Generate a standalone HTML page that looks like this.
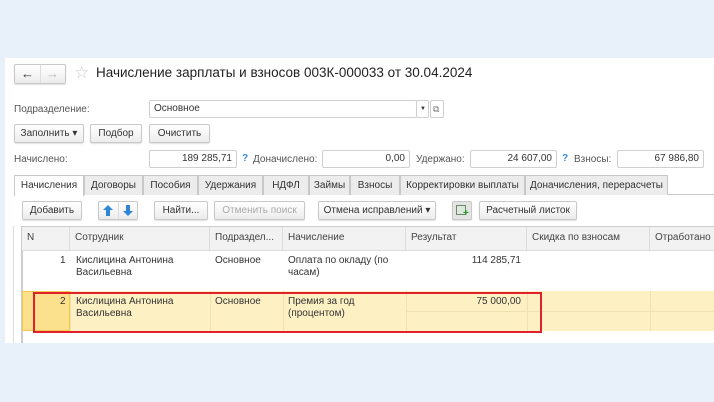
<!DOCTYPE html>
<html><head><meta charset="utf-8"><style>
*{box-sizing:border-box;margin:0;padding:0}
body{width:714px;height:402px;background:#e8f1fa;font-family:"Liberation Sans",Arial,sans-serif;font-size:10px;color:#333;position:relative;overflow:hidden}
.a{position:absolute;white-space:nowrap}
#p{position:absolute;left:5px;top:58px;width:709px;height:285px;background:#fff}
.btn{position:absolute;height:19px;border:1px solid #c8c8c8;border-radius:2px;background:linear-gradient(#fff,#ececec);box-shadow:0 1px 1px rgba(0,0,0,.12);font-size:10px;line-height:17px;text-align:center;color:#333;white-space:nowrap;overflow:hidden}
.inp{position:absolute;height:18px;border:1px solid #cfcfcf;border-radius:2px;background:#fff;line-height:16px;padding:0 4px;font-size:10px;white-space:nowrap}
.r{text-align:right}
.q{color:#3a8bd2;font-weight:bold}
.lbl{color:#555}
.tab{position:absolute;top:175px;height:20px;border:1px solid #c8c8c8;border-bottom:none;background:#ececec;line-height:19px;text-align:center;font-size:10px;white-space:nowrap;overflow:hidden}
.hc{position:absolute;top:227px;height:23px;border-right:1px solid #dcdcdc;line-height:22px;padding-left:5px;color:#444;white-space:nowrap;overflow:hidden}
.c{position:absolute;font-size:10px;line-height:12px;color:#333;white-space:nowrap}
</style></head><body>
<div id="p"></div>
<!-- nav -->
<div class="btn" style="left:14px;top:64px;width:52px;height:20px"></div>
<div class="a" style="left:40px;top:65px;width:1px;height:18px;background:#ddd"></div>
<div class="a" style="left:21px;top:66px;font-size:13px;color:#333">&#8592;</div>
<div class="a" style="left:46px;top:66px;font-size:13px;color:#bbb">&#8594;</div>
<div class="a" style="left:74px;top:63px;font-size:17px;color:#ccc">&#9734;</div>
<div class="a" style="left:96px;top:65px;font-size:13.5px;color:#222">Начисление зарплаты и взносов 003К-000033 от 30.04.2024</div>
<!-- подразделение -->
<div class="a lbl" style="left:14px;top:104px">Подразделение:</div>
<div class="inp" style="left:149px;top:100px;width:268px">Основное</div>
<div class="inp" style="left:416px;top:100px;width:13px;font-size:6px;padding:0 3px">&#9660;</div>
<div class="inp" style="left:430px;top:100px;width:14px;font-size:9px;padding:0 2px;color:#777">&#10697;</div>
<!-- buttons -->
<div class="btn" style="left:14px;top:124px;width:70px">Заполнить ▾</div>
<div class="btn" style="left:90px;top:124px;width:52px">Подбор</div>
<div class="btn" style="left:149px;top:124px;width:61px">Очистить</div>
<!-- totals -->
<div class="a lbl" style="left:14px;top:154px">Начислено:</div>
<div class="inp r" style="left:149px;top:150px;width:88px">189 285,71</div>
<div class="a q" style="left:242px;top:153px">?</div>
<div class="a lbl" style="left:253px;top:154px">Доначислено:</div>
<div class="inp r" style="left:322px;top:150px;width:88px">0,00</div>
<div class="a lbl" style="left:416px;top:154px">Удержано:</div>
<div class="inp r" style="left:470px;top:150px;width:87px">24 607,00</div>
<div class="a q" style="left:562px;top:153px">?</div>
<div class="a lbl" style="left:574px;top:154px">Взносы:</div>
<div class="inp r" style="left:617px;top:150px;width:87px">67 986,80</div>
<!-- tabs -->
<div class="a" style="left:14px;top:194px;width:700px;height:1px;background:#c8c8c8"></div>
<div class="tab" style="left:14px;width:70px;background:#fff;height:21px">Начисления</div>
<div class="tab" style="left:84px;width:59px">Договоры</div>
<div class="tab" style="left:143px;width:55px">Пособия</div>
<div class="tab" style="left:198px;width:65px">Удержания</div>
<div class="tab" style="left:263px;width:46px">НДФЛ</div>
<div class="tab" style="left:309px;width:41px">Займы</div>
<div class="tab" style="left:350px;width:50px">Взносы</div>
<div class="tab" style="left:400px;width:125px">Корректировки выплаты</div>
<div class="tab" style="left:525px;width:143px">Доначисления, перерасчеты</div>
<!-- toolbar -->
<div class="btn" style="left:22px;top:201px;width:60px">Добавить</div>
<div class="btn" style="left:98px;top:201px;width:40px"></div>
<div class="a" style="left:118px;top:202px;width:1px;height:17px;background:#ddd"></div>
<svg class="a" style="left:103px;top:205px" width="10" height="11"><path d="M5 0L10 5H7V11H3V5H0Z" fill="#2f86d6"/></svg>
<svg class="a" style="left:123px;top:205px" width="10" height="11"><path d="M5 11L10 6H7V0H3V6H0Z" fill="#2f86d6"/></svg>
<div class="btn" style="left:154px;top:201px;width:54px">Найти...</div>
<div class="btn" style="left:214px;top:201px;width:91px;color:#aaa">Отменить поиск</div>
<div class="btn" style="left:318px;top:201px;width:118px">Отмена исправлений ▾</div>
<div class="btn" style="left:452px;top:201px;width:20px;background:#e4e4e4"></div>
<div class="a" style="left:456px;top:205px;width:10px;height:10px;border:1px solid #6a8a6a;background:#dde8dd"></div>
<div class="a" style="left:463px;top:210px;color:#2a9a2a;font-size:10px;font-weight:bold;line-height:8px">+</div>
<div class="btn" style="left:479px;top:201px;width:98px">Расчетный листок</div>
<!-- table -->
<div class="a" style="left:13px;top:226px;width:1px;height:117px;background:#ddd"></div>
<div class="a" style="left:21px;top:226px;width:2px;height:117px;background:#ccc"></div>
<div class="a" style="left:22px;top:226px;width:692px;height:25px;background:#f2f2f2;border-top:1px solid #ccc;border-bottom:1px solid #dcdcdc"></div>
<div class="hc" style="left:22px;width:48px">N</div>
<div class="hc" style="left:70px;width:140px">Сотрудник</div>
<div class="hc" style="left:210px;width:73px">Подраздел...</div>
<div class="hc" style="left:283px;width:123px">Начисление</div>
<div class="hc" style="left:406px;width:121px">Результат</div>
<div class="hc" style="left:527px;width:123px">Скидка по взносам</div>
<div class="hc" style="left:650px;width:70px;border:none">Отработано</div>
<!-- row1 -->
<div class="c" style="left:60px;top:255px">1</div>
<div class="c" style="left:76px;top:255px">Кислицина Антонина<br>Васильевна</div>
<div class="c" style="left:215px;top:255px">Основное</div>
<div class="c" style="left:288px;top:255px">Оплата по окладу (по<br>часам)</div>
<div class="c" style="left:406px;top:255px;width:115px;text-align:right">114 285,71</div>
<!-- row2 -->
<div class="a" style="left:22px;top:291px;width:692px;height:40px;background:#fdf1c4"></div>
<div class="a" style="left:22px;top:291px;width:48px;height:40px;background:#fbe08e;border:1px solid #f5c84a"></div>
<div class="a" style="left:70px;top:291px;width:1px;height:40px;background:#f0e2b0"></div>
<div class="a" style="left:210px;top:291px;width:1px;height:40px;background:#f0e2b0"></div>
<div class="a" style="left:283px;top:291px;width:1px;height:40px;background:#f0e2b0"></div>
<div class="a" style="left:406px;top:291px;width:1px;height:40px;background:#f0e2b0"></div>
<div class="a" style="left:527px;top:291px;width:1px;height:40px;background:#f0e2b0"></div>
<div class="a" style="left:650px;top:291px;width:1px;height:40px;background:#f0e2b0"></div>
<div class="a" style="left:406px;top:311px;width:308px;height:1px;background:#f0e2b0"></div>
<div class="c" style="left:60px;top:296px">2</div>
<div class="c" style="left:76px;top:296px">Кислицина Антонина<br>Васильевна</div>
<div class="c" style="left:215px;top:296px">Основное</div>
<div class="c" style="left:288px;top:296px">Премия за год<br>(процентом)</div>
<div class="c" style="left:406px;top:296px;width:115px;text-align:right">75 000,00</div>
<div class="a" style="left:33px;top:292px;width:509px;height:41px;border:2px solid #e0202a"></div>
</body></html>
